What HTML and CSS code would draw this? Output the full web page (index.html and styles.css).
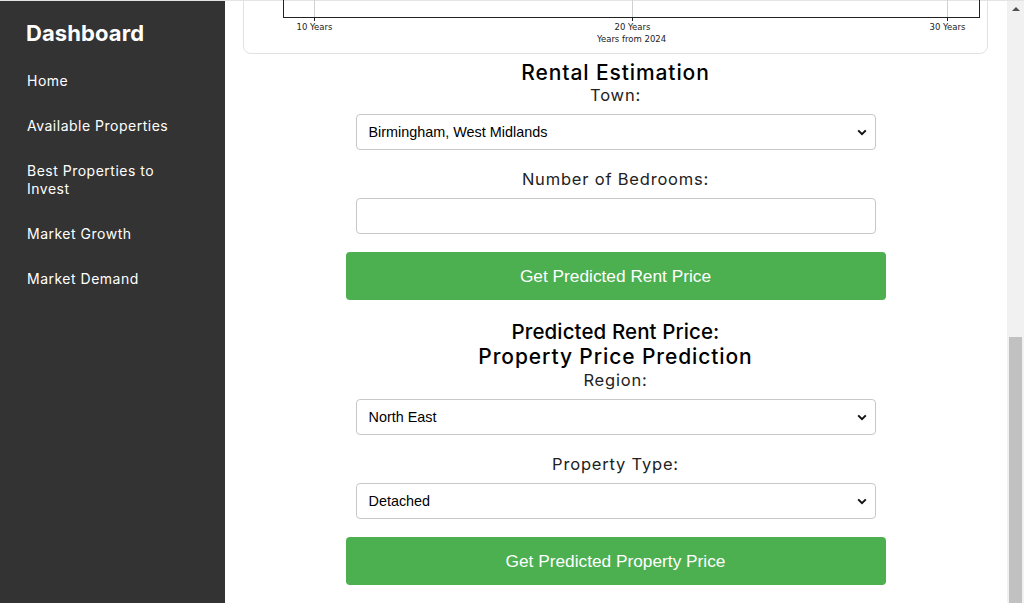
FILE: index.html
```html
<!DOCTYPE html>
<html lang="en">
<head>
<meta charset="utf-8">
<title>Dashboard</title>
<link rel="stylesheet" href="styles.css">
</head>
<body>
<div class="app">
  <aside class="sidebar">
    <h1 class="brand">Dashboard</h1>
    <nav class="nav">
      <a href="#">Home</a>
      <a href="#">Available Properties</a>
      <a href="#">Best Properties to Invest</a>
      <a href="#">Market Growth</a>
      <a href="#">Market Demand</a>
    </nav>
  </aside>
  <main class="main">
    <div class="chart-card">
      <svg class="chart" width="743" height="62" viewBox="0 0 743 62">
        <g stroke="#d0d0d0" stroke-width="1">
          <line x1="70.5" y1="0" x2="70.5" y2="26"/>
          <line x1="388.5" y1="0" x2="388.5" y2="26"/>
          <line x1="703.5" y1="0" x2="703.5" y2="26"/>
        </g>
        <g stroke="#222" stroke-width="1">
          <line x1="39.5" y1="0" x2="39.5" y2="26"/>
          <line x1="735.5" y1="0" x2="735.5" y2="26"/>
          <line x1="39" y1="26.5" x2="736" y2="26.5"/>
          <line x1="70.5" y1="26" x2="70.5" y2="30"/>
          <line x1="388.5" y1="26" x2="388.5" y2="30"/>
          <line x1="703.5" y1="26" x2="703.5" y2="30"/>
        </g>
        <g class="tick" fill="#222" text-anchor="middle">
          <text x="70.5" y="39">10 Years</text>
          <text x="388.5" y="39">20 Years</text>
          <text x="703.5" y="39">30 Years</text>
          <text x="387.5" y="51">Years from 2024</text>
        </g>
      </svg>
    </div>

    <section class="form">
      <h2 class="title">Rental Estimation</h2>
      <label class="label" for="town">Town:</label>
      <select id="town" class="field select">
        <option>Birmingham, West Midlands</option>
      </select>
      <label class="label gap" for="beds">Number of Bedrooms:</label>
      <input id="beds" class="field" type="text">
      <button class="btn">Get Predicted Rent Price</button>

      <h2 class="title sub">Predicted Rent Price:</h2>
      <h2 class="title">Property Price Prediction</h2>
      <label class="label after" for="region">Region:</label>
      <select id="region" class="field select">
        <option>North East</option>
      </select>
      <label class="label gap" for="ptype">Property Type:</label>
      <select id="ptype" class="field select">
        <option>Detached</option>
      </select>
      <button class="btn">Get Predicted Property Price</button>
    </section>
  </main>
  <div class="scrollbar">
    <span class="arrow"></span>
    <span class="thumb"></span>
  </div>
</div>
</body>
</html>
```

FILE: styles.css
```css
* { box-sizing: border-box; }

html, body {
  margin: 0;
  padding: 0;
  height: 603px;
  overflow: hidden;
  background: #fff;
}

body {
  font-family: "Inter", "Open Sans", sans-serif;
}

.app {
  display: flex;
  height: 603px;
  border-top: 1px solid #e4e4e4;
}

.sidebar {
  width: 225px;
  flex: 0 0 225px;
  background: #333333;
  color: #fff;
  padding: 18px 20px 0 27px;
}

.brand {
  margin: 0 0 0 -1px;
  font-size: 22px;
  line-height: 28px;
  font-weight: 700;
  letter-spacing: 0.1px;
}

.nav {
  display: flex;
  flex-direction: column;
  gap: 27px;
  margin-top: 25px;
}

.nav a {
  color: #fff;
  text-decoration: none;
  font-size: 14px;
  line-height: 18px;
  font-weight: 400;
  letter-spacing: 0.5px;
  max-width: 145px;
}

.main {
  flex: 1;
  display: flex;
  flex-direction: column;
  padding: 0 19px 0 18px;
}

.chart-card {
  margin-top: -11px;
  height: 64px;
  border: 1px solid #e2e2e2;
  border-radius: 8px;
  overflow: hidden;
}

.chart { display: block; }

.tick text {
  font-family: "DejaVu Sans", sans-serif;
  font-size: 8.5px;
}

.form {
  width: 540px;
  margin: 6px auto 0;
  display: flex;
  flex-direction: column;
  align-items: center;
  text-align: center;
}

.title {
  margin: 0;
  font-size: 21px;
  line-height: 25px;
  font-weight: 500;
  letter-spacing: 0.9px;
  color: #000;
}

.title.sub {
  margin-top: 19px;
  font-size: 20.5px;
  letter-spacing: 0.1px;
}

.label {
  display: block;
  font-size: 16.5px;
  line-height: 20px;
  font-weight: 400;
  letter-spacing: 0.8px;
  color: #222;
  margin-bottom: 9px;
}

.label.gap { margin-top: 19px; }
.label.after { margin-top: 1px; }

.field {
  width: 520px;
  height: 36px;
  border: 1px solid #c8c8c8;
  border-radius: 4px;
  background: #fff;
  padding: 0 12px;
  font-family: "Liberation Sans", Arial, sans-serif;
  font-size: 14.4px;
  color: #000;
  outline: none;
}

.select {
  -webkit-appearance: none;
  appearance: none;
  background-image: url("data:image/svg+xml,%3Csvg xmlns='http://www.w3.org/2000/svg' width='10' height='7' viewBox='0 0 10 7'%3E%3Cpath d='M1.2 1.4 5 5.2 8.8 1.4' fill='none' stroke='%23111' stroke-width='2'/%3E%3C/svg%3E");
  background-repeat: no-repeat;
  background-position: right 8px center;
  background-size: 10px 7px;
}

.btn {
  width: 540px;
  height: 48px;
  margin-top: 18px;
  border: none;
  border-radius: 4px;
  background: #4caf50;
  color: #fff;
  font-family: "Liberation Sans", Arial, sans-serif;
  font-size: 17.3px;
  cursor: pointer;
}

.scrollbar {
  width: 17px;
  flex: 0 0 17px;
  background: #f1f1f1;
  display: flex;
  flex-direction: column;
  align-items: center;
}

.arrow {
  margin-top: 6px;
  width: 0;
  height: 0;
  border-left: 4px solid transparent;
  border-right: 4px solid transparent;
  border-bottom: 4px solid #505050;
}

.thumb {
  margin-top: auto;
  width: 13px;
  height: 266px;
  background: #c1c1c1;
}
```
